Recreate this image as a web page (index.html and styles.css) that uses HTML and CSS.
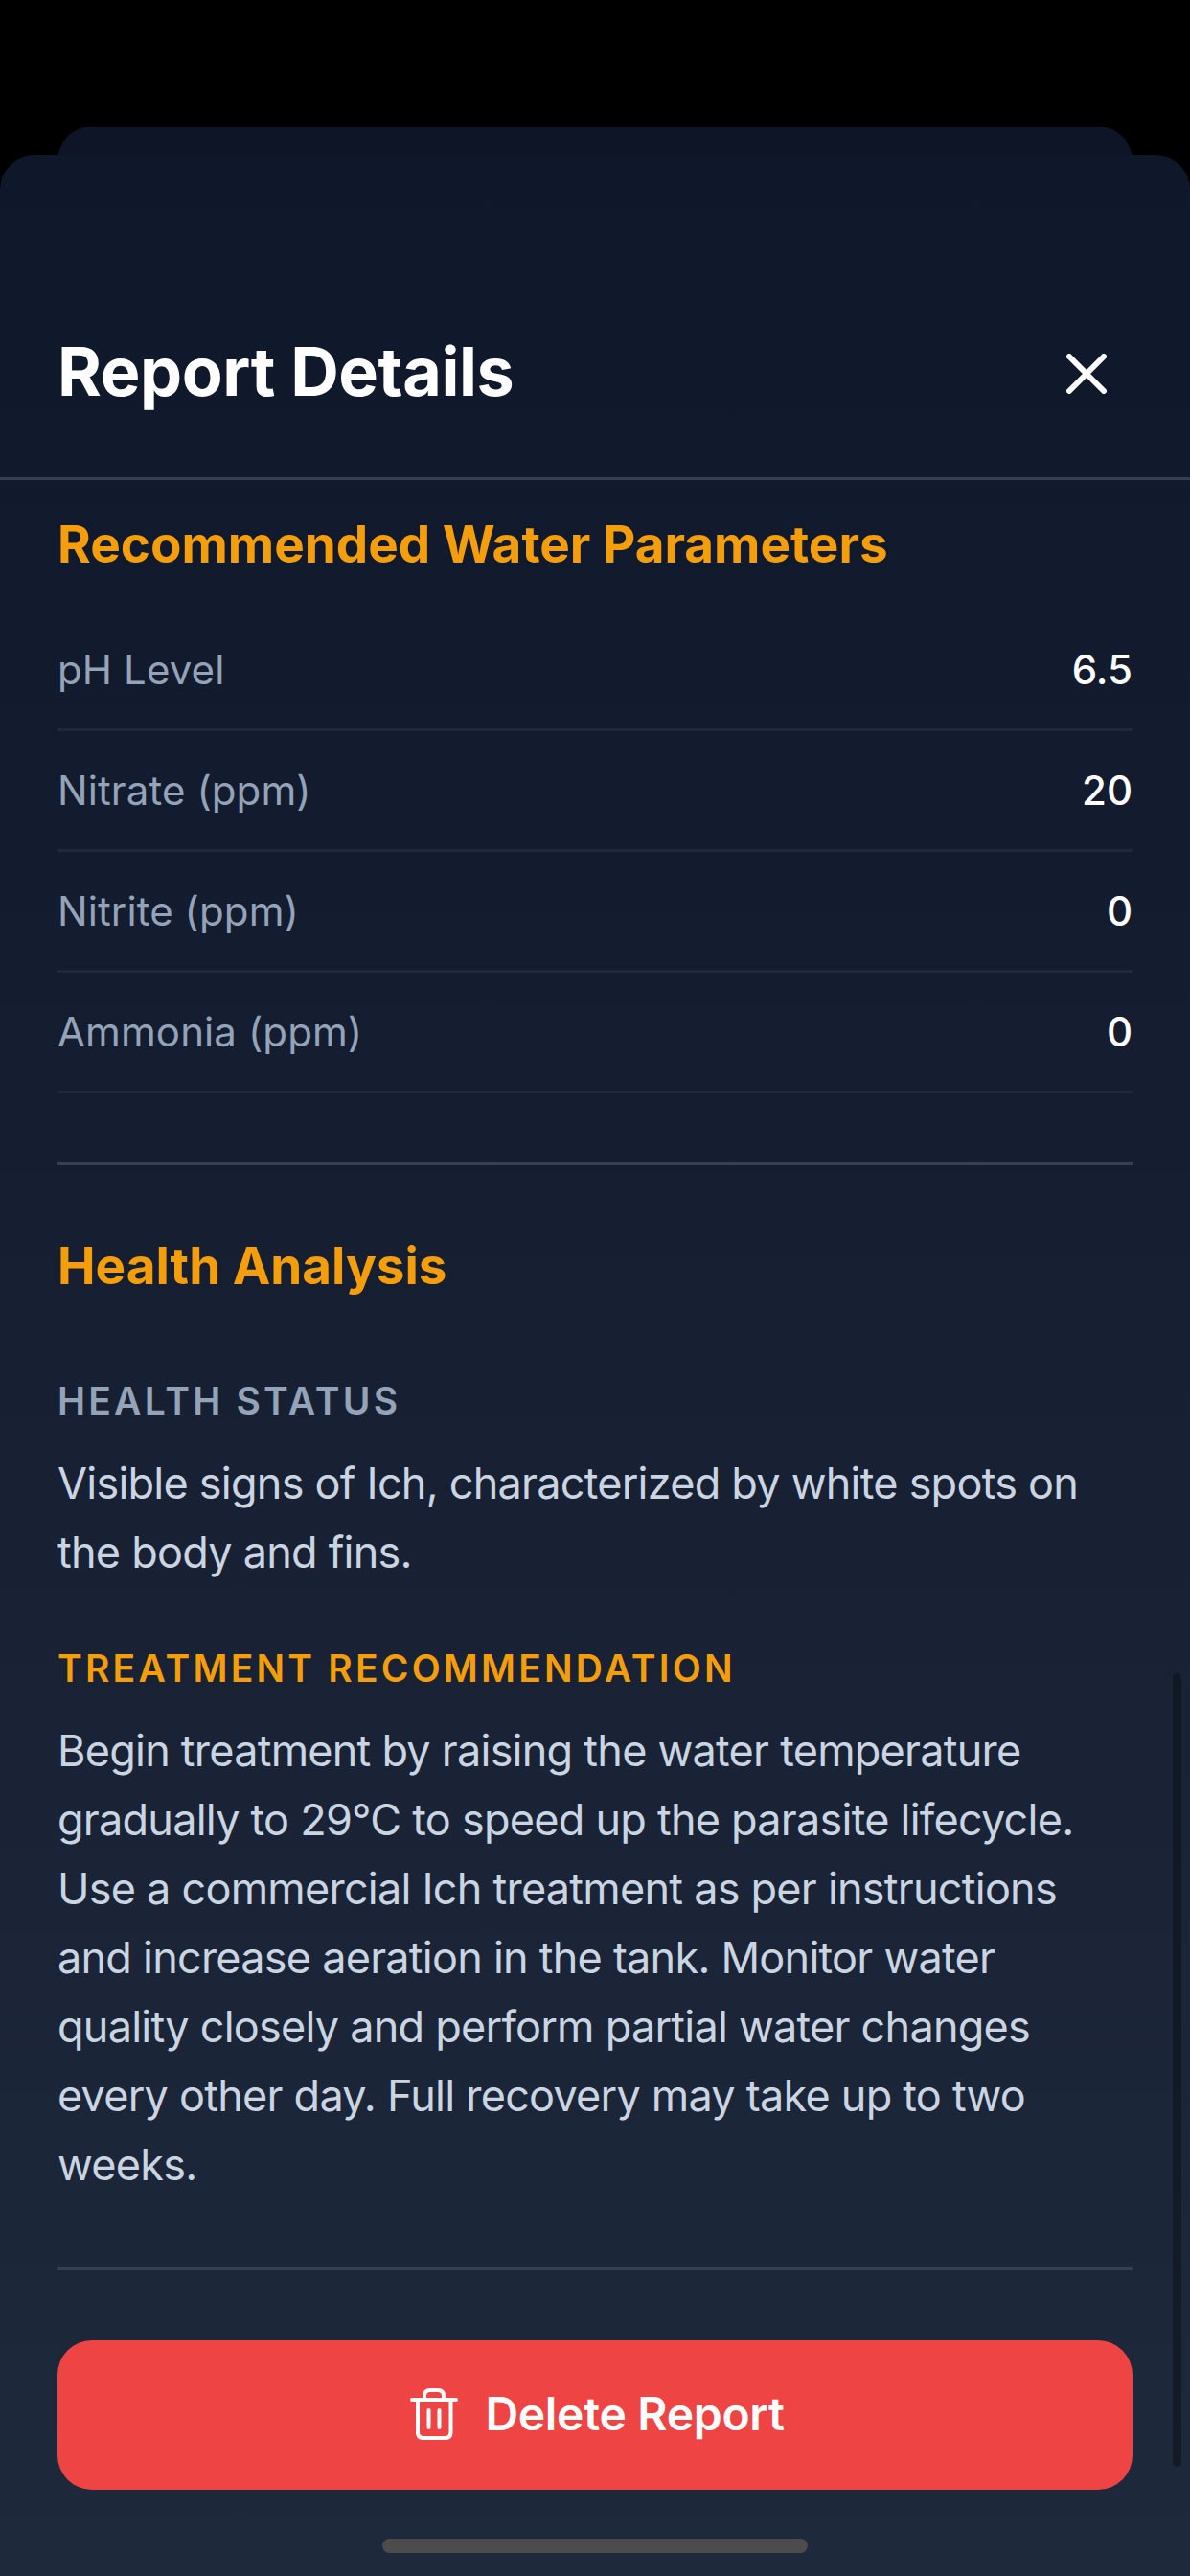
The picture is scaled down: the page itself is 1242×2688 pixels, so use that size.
FILE: index.html
```html
<!DOCTYPE html>
<html lang="en">
<head>
<meta charset="utf-8">
<title>Report Details</title>
<link rel="stylesheet" href="styles.css">
</head>
<body>
<div class="screen">
  <div class="back-card"></div>
  <section class="sheet">
    <header class="sheet-header">
      <h1 class="sheet-title">Report Details</h1>
      <svg class="close-icon" viewBox="0 0 42 42" width="42" height="42" aria-hidden="true">
        <path d="M3 3 L39 39 M39 3 L3 39"/>
      </svg>
    </header>
    <div class="sheet-body">
      <h2 class="section-title">Recommended Water Parameters</h2>
      <div class="param-list">
        <div class="param-row"><span class="param-name">pH Level</span><span class="param-value">6.5</span></div>
        <div class="param-row"><span class="param-name">Nitrate (ppm)</span><span class="param-value">20</span></div>
        <div class="param-row"><span class="param-name">Nitrite (ppm)</span><span class="param-value">0</span></div>
        <div class="param-row"><span class="param-name">Ammonia (ppm)</span><span class="param-value">0</span></div>
      </div>
      <div class="analysis">
        <h2 class="section-title">Health Analysis</h2>
        <h3 class="field-label">HEALTH STATUS</h3>
        <p class="field-text">Visible signs of Ich, characterized by white spots on the body and fins.</p>
        <h3 class="field-label field-label-amber">TREATMENT RECOMMENDATION</h3>
        <p class="field-text">Begin treatment by raising the water temperature gradually to 29°C to speed up the parasite lifecycle. Use a commercial Ich treatment as per instructions and increase aeration in the tank. Monitor water quality closely and perform partial water changes every other day. Full recovery may take up to two weeks.</p>
      </div>
      <div class="actions">
        <button class="delete-button" type="button">
          <svg class="trash-icon" viewBox="0 0 54 60" width="54" height="60" aria-hidden="true">
            <path d="M4 15 H50"/>
            <path d="M10 15 V49 Q10 55 16 55 H38.500 Q44.500 55 44.500 49 V15"/>
            <path d="M17 15 V11 Q17 5 23 5 H31 Q37 5 37 11 V15"/>
            <path d="M21.500 26 V44 M32.500 26 V44"/>
          </svg>
          <span>Delete Report</span>
        </button>
      </div>
    </div>
    <div class="scrollbar"></div>
    <div class="home-indicator"></div>
  </section>
</div>
</body>
</html>
```

FILE: styles.css
```css
* { box-sizing: border-box; }
html, body { margin: 0; padding: 0; background: #000; }
body { font-family: Inter, "Liberation Sans", sans-serif; }
h1, h2, h3, p { margin: 0; }

.screen {
  width: 1242px;
  height: 2688px;
  padding-top: 132px;
  display: flex;
  flex-direction: column;
  overflow: hidden;
  background: #000;
}
.back-card {
  flex: none;
  height: 60px;
  margin: 0 60px -30px;
  background: #0d1526;
  border-radius: 36px 36px 0 0;
}
.sheet {
  position: relative;
  flex: 1;
  display: flex;
  flex-direction: column;
  border-radius: 36px 36px 0 0;
  background: linear-gradient(180deg, #0f172a 0%, #1e293b 100%);
}
.sheet-header {
  flex: none;
  height: 339px;
  padding: 0 60px 70px;
  display: flex;
  align-items: flex-end;
  justify-content: space-between;
  border-bottom: 3px solid #334155;
}
.sheet-title {
  font-size: 70px;
  line-height: 80px;
  font-weight: 700;
  letter-spacing: -0.4px;
  color: #fff;
}
.close-icon {
  margin: 0 27px 17px 0;
  fill: none;
  stroke: #fff;
  stroke-width: 6;
  stroke-linecap: round;
}
.sheet-body {
  flex: 1;
  padding: 34px 60px 0;
  display: flex;
  flex-direction: column;
}
.section-title {
  font-size: 53px;
  line-height: 66px;
  font-weight: 700;
  color: #f59e0b;
}
.param-list { margin-top: 36px; }
.param-row {
  height: 126px;
  display: flex;
  align-items: center;
  justify-content: space-between;
  border-bottom: 3px solid #1e293b;
}
.param-name { font-size: 42px; letter-spacing: 0.1px; color: #94a3b8; }
.param-value { font-size: 42px; font-weight: 500; color: #fff; }
.analysis {
  margin-top: 72px;
  padding-top: 72px;
  border-top: 3px solid #334155;
}
.field-label {
  margin-top: 84px;
  font-size: 39px;
  line-height: 48px;
  font-weight: 600;
  letter-spacing: 3.2px;
  color: #94a3b8;
}
.field-label-amber { margin-top: 61px; color: #f59e0b; }
.field-text {
  margin-top: 26px;
  font-size: 45px;
  line-height: 72px;
  letter-spacing: -0.76px;
  color: #cbd5e1;
}
.actions {
  margin-top: 71px;
  padding-top: 73px;
  border-top: 3px solid #334155;
}
.delete-button {
  width: 100%;
  height: 156px;
  padding: 0 0 3px 3px;
  display: flex;
  align-items: center;
  justify-content: center;
  gap: 26px;
  border: 0;
  border-radius: 36px;
  background: #ef4444;
  color: #fff;
  font-family: inherit;
  font-size: 48px;
  font-weight: 600;
  letter-spacing: -0.3px;
}
.trash-icon {
  fill: none;
  stroke: #fff;
  stroke-width: 4;
  stroke-linecap: round;
}
.scrollbar {
  position: absolute;
  top: 1584px;
  right: 9px;
  width: 9px;
  height: 828px;
  border-radius: 5px;
  background: rgba(0, 0, 0, 0.3);
}
.home-indicator {
  position: absolute;
  left: 399px;
  bottom: 24px;
  width: 444px;
  height: 15px;
  border-radius: 8px;
  background: #4c4c4c;
}
```
